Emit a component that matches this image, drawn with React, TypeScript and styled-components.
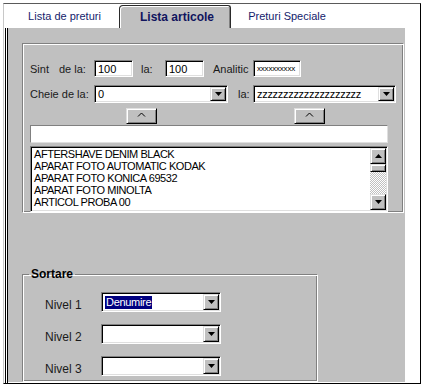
import React from "react";
import styled, { createGlobalStyle } from "styled-components";

const GlobalStyle = createGlobalStyle`
  html, body {
    margin: 0;
    background: #fff;
  }
  body {
    font-family: "Liberation Sans", Arial, sans-serif;
    font-size: 11px;
    color: #000;
  }
`;

const listItems = [
  "AFTERSHAVE DENIM BLACK",
  "APARAT FOTO AUTOMATIC KODAK",
  "APARAT FOTO KONICA 69532",
  "APARAT FOTO MINOLTA",
  "ARTICOL PROBA 00",
];

const Arrow: React.FC<{ up?: boolean }> = ({ up }) => (
  <svg width="7" height="4" viewBox="0 0 7 4">
    <polygon points={up ? "0,4 7,4 3.5,0" : "0,0 7,0 3.5,4"} fill="#000" />
  </svg>
);

const Caret: React.FC = () => (
  <svg width="9" height="5" viewBox="0 0 9 5">
    <polyline points="1,4.5 4.5,1 8,4.5" fill="none" stroke="#000" strokeWidth="1" />
  </svg>
);

const Combo: React.FC<{ w: number; h: number; children?: React.ReactNode }> = ({ w, h, children }) => (
  <Sunken $w={w} $h={h}>
    <ComboText>{children}</ComboText>
    <DropButton>
      <Arrow />
    </DropButton>
  </Sunken>
);

export default function App() {
  return (
    <>
      <GlobalStyle />
      <Frame>
        <TabStrip>
          <Tab $w={115} $pad={6}>Lista de preturi</Tab>
          <ActiveTab>Lista articole</ActiveTab>
          <Tab $w={112} $pad={0}>Preturi Speciale</Tab>
        </TabStrip>
        <Page>
          <Panel>
            <FilterGroup>
              <Row>
                <Label $w={29}>Sint</Label>
                <Label $w={35}>de la:</Label>
                <Sunken $w={39} $h={17}>
                  <FieldText>100</FieldText>
                </Sunken>
                <Label $w={24} $ml={8}>la:</Label>
                <Sunken $w={39} $h={17}>
                  <FieldText>100</FieldText>
                </Sunken>
                <Label $w={40} $ml={9}>Analitic</Label>
                <Sunken $w={48} $h={17}>
                  <TinyText>xxxxxxxxxx</TinyText>
                </Sunken>
              </Row>
              <Row $mt={8}>
                <Label $w={64}>Cheie de la:</Label>
                <Combo w={134} h={18}>0</Combo>
                <Label $w={15} $ml={10}>la:</Label>
                <Combo w={143} h={18}>zzzzzzzzzzzzzzzzzzzz</Combo>
              </Row>
              <Row $mt={5}>
                <CaretButton $ml={96}>
                  <Caret />
                </CaretButton>
                <CaretButton $ml={137}>
                  <Caret />
                </CaretButton>
              </Row>
              <SearchBox />
              <ListBox>
                <Items>
                  {listItems.map((item) => (
                    <Item key={item}>{item}</Item>
                  ))}
                </Items>
                <ScrollBar>
                  <ScrollButton>
                    <Arrow up />
                  </ScrollButton>
                  <Thumb />
                  <Track />
                  <ScrollButton>
                    <Arrow />
                  </ScrollButton>
                </ScrollBar>
              </ListBox>
            </FilterGroup>
            <SortGroup>
              <Legend>Sortare</Legend>
              {[1, 2, 3].map((n) => (
                <LevelRow key={n}>
                  <LevelLabel>Nivel {n}</LevelLabel>
                  <Combo w={120} h={20}>
                    {n === 1 && <Selected>Denumire</Selected>}
                  </Combo>
                </LevelRow>
              ))}
            </SortGroup>
          </Panel>
        </Page>
      </Frame>
    </>
  );
}

const Frame = styled.div`
  box-sizing: border-box;
  margin: 3px 0 0 3px;
  width: 418px;
  height: 381px;
  border-top: 1px solid #5a5a5a;
  border-left: 1px solid #c8c8c8;
  border-right: 1px solid #000;
  border-bottom: 1px solid #000;
  background: #fff;
  display: flex;
  flex-direction: column;
`;

const TabStrip = styled.div`
  height: 24px;
  display: flex;
  align-items: flex-end;
  flex-shrink: 0;
`;

const Tab = styled.div<{ $w: number; $pad: number }>`
  box-sizing: border-box;
  width: ${(p) => p.$w}px;
  height: 23px;
  padding-left: ${(p) => p.$pad}px;
  padding-bottom: 2px;
  display: flex;
  align-items: center;
  justify-content: center;
  color: #141c6c;
  font-size: 11px;
`;

const ActiveTab = styled.div`
  box-sizing: border-box;
  width: 112px;
  height: 23px;
  padding-left: 4px;
  padding-bottom: 1px;
  display: flex;
  align-items: center;
  justify-content: center;
  background: #c0c0c0;
  border: 1px solid #2a2a2a;
  border-bottom: none;
  border-top-left-radius: 4px;
  border-top-right-radius: 3px;
  box-shadow: inset 1px 1px #fff, inset -1px 0 #808080;
  color: #10145e;
  font-size: 12px;
  font-weight: 700;
`;

const Page = styled.div`
  flex: 1;
  display: flex;
  margin-left: 1px;
  border-left: 3px double #000;
  min-height: 0;
`;

const Panel = styled.div`
  box-sizing: border-box;
  width: 397px;
  height: 354px;
  padding: 15px 0 0 14px;
  background: #c0c0c0;
  overflow: hidden;
  display: flex;
  flex-direction: column;
  align-items: flex-start;
`;

const FilterGroup = styled.div`
  box-sizing: border-box;
  width: 382px;
  height: 178px;
  padding: 16px 0 0 7px;
  border: 1px solid;
  border-color: #808080 #fff #fff #808080;
  box-shadow: inset 1px 1px #fff, inset -1px -1px #808080;
  display: flex;
  flex-direction: column;
`;

const Row = styled.div<{ $mt?: number }>`
  display: flex;
  align-items: center;
  margin-top: ${(p) => p.$mt ?? 0}px;
`;

const Label = styled.span<{ $w: number; $ml?: number }>`
  width: ${(p) => p.$w}px;
  margin-left: ${(p) => p.$ml ?? 0}px;
  font-size: 11px;
  color: #1a1a1a;
  white-space: nowrap;
`;

const Sunken = styled.div<{ $w: number; $h: number }>`
  box-sizing: border-box;
  width: ${(p) => p.$w}px;
  height: ${(p) => p.$h}px;
  background: #fff;
  border: 1px solid;
  border-color: #808080 #fff #fff #808080;
  box-shadow: inset 1px 1px #000, inset -1px -1px #dfdfdf;
  display: flex;
  align-items: center;
  padding: 1px;
`;

const FieldText = styled.span`
  padding-left: 2px;
  font-size: 11px;
  line-height: 13px;
  margin-top: 2px;
`;

const TinyText = styled.span`
  padding-left: 2px;
  font-size: 8px;
  line-height: 10px;
  letter-spacing: -0.2px;
`;

const ComboText = styled.div`
  flex: 1;
  padding-left: 2px;
  font-size: 11px;
  line-height: 13px;
  white-space: nowrap;
  overflow: hidden;
  letter-spacing: -0.3px;
  margin-top: 1px;
`;

const Raised = styled.div`
  box-sizing: border-box;
  background: #c0c0c0;
  border: 1px solid;
  border-color: #dfdfdf #000 #000 #dfdfdf;
  box-shadow: inset 1px 1px #fff, inset -1px -1px #808080;
  display: flex;
  align-items: center;
  justify-content: center;
`;

const DropButton = styled(Raised)`
  width: 16px;
  height: 100%;
  flex-shrink: 0;
`;

const CaretButton = styled(Raised)<{ $ml: number }>`
  width: 31px;
  height: 16px;
  margin-left: ${(p) => p.$ml}px;
  padding-bottom: 3px;
`;

const SearchBox = styled.div`
  box-sizing: border-box;
  width: 358px;
  height: 18px;
  margin-top: 1px;
  background: #fff;
  border: 1px solid;
  border-color: #808080 #dfdfdf #dfdfdf #808080;
`;

const ListBox = styled.div`
  box-sizing: border-box;
  width: 358px;
  height: 66px;
  margin-top: 3px;
  background: #fff;
  border: 1px solid;
  border-color: #808080 #fff #fff #808080;
  box-shadow: inset 1px 1px #000, inset -1px -1px #dfdfdf;
  padding: 1px;
  display: flex;
`;

const Items = styled.div`
  flex: 1;
  padding: 0 0 0 2px;
  overflow: hidden;
`;

const Item = styled.div`
  font-size: 11px;
  line-height: 12px;
  letter-spacing: -0.45px;
  white-space: nowrap;
`;

const ScrollBar = styled.div`
  width: 16px;
  display: flex;
  flex-direction: column;
`;

const ScrollButton = styled(Raised)`
  width: 16px;
  height: 16px;
  flex-shrink: 0;
`;

const Thumb = styled(Raised)`
  width: 16px;
  height: 8px;
  flex-shrink: 0;
`;

const Track = styled.div`
  flex: 1;
  background-color: #fff;
  background-image: conic-gradient(#c0c0c0 25%, #fff 0 50%, #c0c0c0 0 75%, #fff 0);
  background-size: 2px 2px;
`;

const SortGroup = styled.fieldset`
  box-sizing: border-box;
  width: 296px;
  height: 140px;
  margin: 54px 0 0 0;
  padding: 11px 0 0 0;
  min-width: 0;
  border: 1px solid;
  border-color: #808080 #fff #fff #808080;
  box-shadow: inset 1px 1px #fff, inset -1px -1px #808080;
  display: flex;
  flex-direction: column;
  gap: 12px;
`;

const Legend = styled.legend`
  margin-left: 6px;
  padding: 0 2px;
  font-size: 12px;
  line-height: 14px;
  font-weight: 700;
  color: #000;
`;

const LevelRow = styled.div`
  display: flex;
  align-items: flex-end;
  padding-left: 22px;
`;

const LevelLabel = styled.span`
  width: 56px;
  font-size: 12px;
  line-height: 13px;
  color: #1a1a1a;
`;

const Selected = styled.span`
  display: inline-block;
  background: #000080;
  color: #fff;
  padding: 0 1px;
  line-height: 13px;
`;
